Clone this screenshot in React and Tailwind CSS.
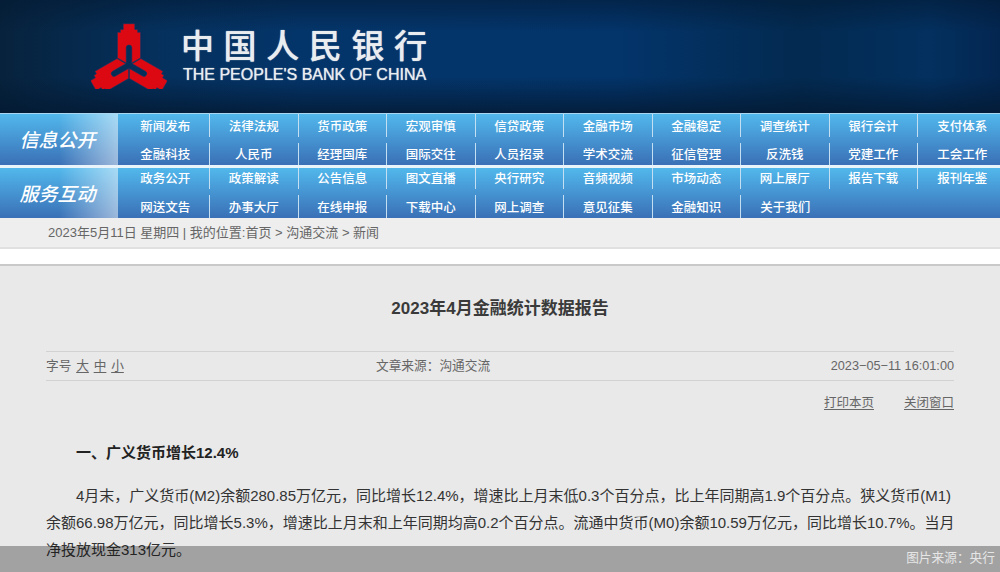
const FONT = { fontFamily: '"Liberation Sans", "Noto Sans CJK SC", sans-serif' };

const blocks = [
  {
    title: "信息公开",
    h: "h-[51px]",
    rows: "grid-rows-[23px_22px]",
    pad1: "pt-[3px]",
    pad2: "pt-[3px]",
    rows1: [
      "新闻发布", "法律法规", "货币政策", "宏观审慎", "信贷政策",
      "金融市场", "金融稳定", "调查统计", "银行会计", "支付体系",
    ],
    rows2: [
      "金融科技", "人民币", "经理国库", "国际交往", "人员招录",
      "学术交流", "征信管理", "反洗钱", "党建工作", "工会工作",
    ],
  },
  {
    title: "服务互动",
    h: "h-[50px]",
    rows: "grid-rows-[21px_23px]",
    pad1: "pt-[1px]",
    pad2: "pt-[4px]",
    rows1: [
      "政务公开", "政策解读", "公告信息", "图文直播", "央行研究",
      "音频视频", "市场动态", "网上展厅", "报告下载", "报刊年鉴",
    ],
    rows2: [
      "网送文告", "办事大厅", "在线申报", "下载中心", "网上调查",
      "意见征集", "金融知识", "关于我们",
    ],
  },
];

function Logo() {
  const arm =
    "M-6,-43 L6,-43 L6,-37 L9,-37 L9,-34 L12,-34 L12,-7.4 L2.9,-2.2 L2.9,-18 A2.9,2.9 0 0 0 -2.9,-18 L-2.9,-2.2 L-12,-7.4 L-12,-34 L-9,-34 L-9,-37 L-6,-37 Z";
  return (
    <svg width="76" height="68" viewBox="-38 -44 76 68" className="shrink-0">
      {[0, 120, 240].map((r) => (
        <path key={r} d={arm} fill="#dc0812" stroke="#0b3a6b" strokeWidth="0.5" transform={`rotate(${r}) scale(0.96)`} />
      ))}
    </svg>
  );
}

function NavBlock({ b }) {
  const cells = [
    ...b.rows1.map((t, i) => ({ t, sep: i < 9, pad: b.pad1 })),
    ...b.rows2.map((t, i) => ({ t, sep: i < b.rows2.length - 1 && i < 9, pad: b.pad2 })),
  ];
  return (
    <div className={`flex ${b.h} bg-gradient-to-b from-[#52b8ec] to-[#3a70b6]`}>
      <div className="w-[118px] shrink-0 pt-[2px] pr-[3px] flex items-center justify-center bg-gradient-to-r from-transparent from-50% to-white/50">
        <span className="text-white italic font-medium text-[19px] leading-none">{b.title}</span>
      </div>
      <div className={`pl-[3.5px] grid grid-cols-[repeat(10,88.5px)] ${b.rows} gap-y-[6px] content-start`}>
        {cells.map((c, i) => (
          <div
            key={i}
            className={`flex items-center justify-center text-white font-medium text-[12.5px] leading-none whitespace-nowrap ${c.pad} ${c.sep ? "border-r border-[#c5dff2]" : ""}`}
          >
            {c.t}
          </div>
        ))}
      </div>
    </div>
  );
}

export default function App() {
  return (
    <div className="relative h-[572px] w-[1000px] overflow-hidden bg-[#e9e9e9]" style={FONT}>
      <header className="flex h-[113px] items-start pl-[90.5px] pt-[21px] bg-[linear-gradient(to_bottom,rgba(3,25,50,0.55),rgba(3,25,50,0)_28%,rgba(3,25,50,0)_68%,rgba(3,25,50,0.8)),linear-gradient(to_right,#07223c_0%,#05305c_15%,#04356a_30%,#03346a_62%,#032a50_80%,#03305f_93%,#032650_100%)]">
        <Logo />
        <div className="ml-[14.5px] pt-[7px] text-[#e9edf0]">
          <div className="text-[33px] leading-[38px] tracking-[9.6px] font-medium whitespace-nowrap [text-shadow:0_0_1px_#e9edf0]">中国人民银行</div>
          <div className="mt-[0px] pl-[2px] text-[16px] leading-[18px] whitespace-nowrap [text-shadow:0_0_1px_#e9edf0]">THE PEOPLE'S BANK OF CHINA</div>
        </div>
      </header>

      <nav className="bg-[#eef6fb]">
        <div className="h-px bg-[#a9d6f0]" />
        <NavBlock b={blocks[0]} />
        <div className="h-[3px] bg-[#e9f3fa]" />
        <NavBlock b={blocks[1]} />
      </nav>

      <div className="h-[29px] pl-[48px] flex items-center bg-[#eeeeee] text-[13px] text-[#666666] whitespace-nowrap">
        2023年5月11日&nbsp;星期四&nbsp;|&nbsp;我的位置:首页&nbsp;&gt;&nbsp;沟通交流&nbsp;&gt;&nbsp;新闻
      </div>
      <div className="h-[19px] bg-white border-y-2 border-t-[#e0e0e0] border-b-[#c9c9c9]" />

      <main className="px-[46px] pt-[32px]">
        <h1 className="text-center font-bold text-[17px] leading-[22px] text-[#3a3a3a]">2023年4月金融统计数据报告</h1>
        <div className="mt-[31px] h-[30px] pt-[1.5px] flex items-center border-y border-[#d2d2d2] text-[12.7px] text-[#666666]">
          <div className="w-[330px] flex gap-[4.8px]">
            <span>字号</span>
            <span className="underline underline-offset-2">大</span>
            <span className="underline underline-offset-2">中</span>
            <span className="underline underline-offset-2">小</span>
          </div>
          <div className="flex-1">文章来源：沟通交流</div>
          <div>2023−05−11 16:01:00</div>
        </div>
        <div className="mt-[13px] flex justify-end gap-[30px] text-[12.5px] leading-[18px] text-[#666666]">
          <span className="underline underline-offset-2">打印本页</span>
          <span className="underline underline-offset-2">关闭窗口</span>
        </div>
        <h2 className="mt-[31px] pl-[30px] font-bold text-[15px] leading-[20px] text-[#222222]">一、广义货币增长12.4%</h2>
        <p className="mt-[19px] text-[15px] leading-[27px] text-[#333333] whitespace-nowrap">
          <span className="pl-[30px]">4月末，广义货币(M2)余额280.85万亿元，同比增长12.4%，增速比上月末低0.3个百分点，比上年同期高1.9个百分点。狭义货币(M1)</span>
          <br />
          余额66.98万亿元，同比增长5.3%，增速比上月末和上年同期均高0.2个百分点。流通中货币(M0)余额10.59万亿元，同比增长10.7%。当月
          <br />
          净投放现金313亿元。
        </p>
      </main>

      <div className="absolute inset-x-0 bottom-0 h-[26px] bg-black/30 flex items-center justify-end pr-[5px] text-[12.7px] text-[#e6e6e6]">
        图片来源：央行
      </div>
    </div>
  );
}
